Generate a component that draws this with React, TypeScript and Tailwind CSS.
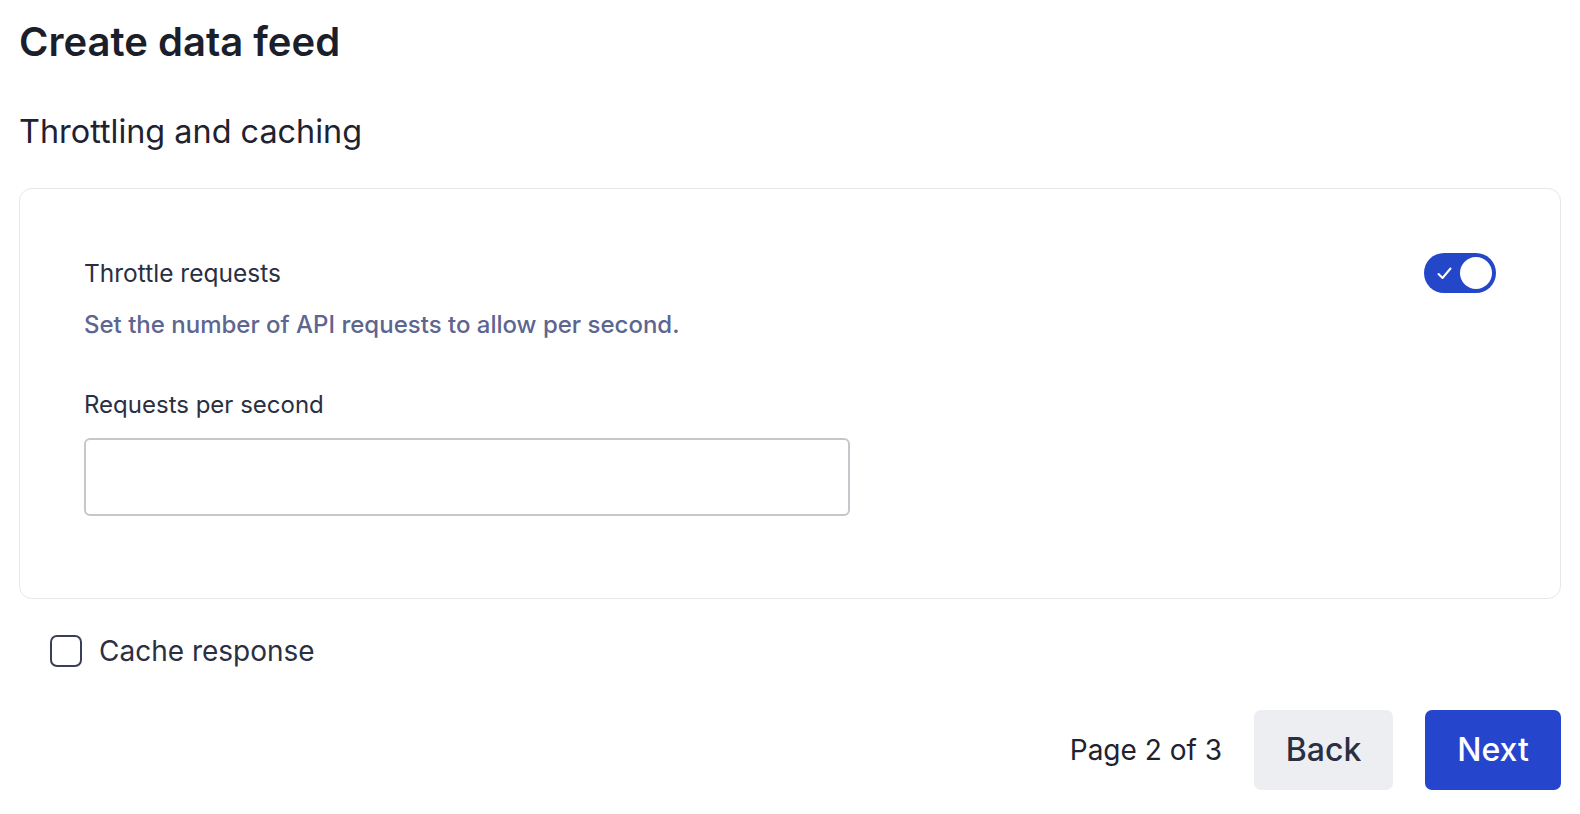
import { useState } from "react"

export default function App() {
  const [throttle, setThrottle] = useState(true)
  const [cache, setCache] = useState(false)

  return (
    <main className="min-h-screen bg-white px-[19px] pt-[18px] font-['Inter',sans-serif] text-[#1b1e2b]">
      <h1 className="text-[40px] font-semibold leading-[48px]">
        Create data feed
      </h1>
      <h2 className="mt-[46px] text-[32.4px] font-normal leading-[40px] text-[#1f2230]">
        Throttling and caching
      </h2>

      <section className="mt-[36px] rounded-[13px] border border-[#e6e7eb] px-[64px] pt-[64px] pb-[82px]">
        <div className="flex items-center justify-between">
          <span className="text-[24.5px] leading-[32px] text-[#2b2f42]">
            Throttle requests
          </span>
          <Toggle on={throttle} onClick={() => setThrottle(!throttle)} />
        </div>
        <p className="mt-[16px] text-[24px] font-medium leading-[32px] text-[#5d6591]">
          Set the number of API requests to allow per second.
        </p>

        <label className="mt-[48px] block text-[24px] leading-[32px] text-[#2b2f42]">
          Requests per second
        </label>
        <input
          type="text"
          className="mt-[17px] block h-[78px] w-[766px] rounded-[6px] border-2 border-[#c6c7cc] bg-white px-4 text-[24px] outline-none"
        />
      </section>

      <div className="mt-[34px] flex items-center pl-[31px]">
        <button
          onClick={() => setCache(!cache)}
          className="h-[32px] w-[32px] rounded-[7px] border-2 border-[#3b3f55] bg-white"
        />
        <span className="ml-[17px] text-[28px] leading-[36px] text-[#2b2f42]">
          Cache response
        </span>
      </div>

      <div className="mt-[41px] flex items-center justify-end gap-[32px]">
        <span className="text-[28px] leading-[36px] text-[#1f2230]">Page 2 of 3</span>
        <div className="flex gap-[32px]">
          <button className="h-[80px] w-[139px] rounded-[7px] bg-[#eceef2] text-[32px] font-medium text-[#2b2f42]">
            Back
          </button>
          <button className="h-[80px] w-[136px] rounded-[7px] bg-[#2545cc] text-[32px] font-medium text-white">
            Next
          </button>
        </div>
      </div>
    </main>
  )
}

function Toggle({ on, onClick }: { on: boolean; onClick: () => void }) {
  return (
    <button
      onClick={onClick}
      className="flex h-[40px] w-[72px] items-center justify-between rounded-full bg-[#2446c9] pl-[13px] pr-[4px]"
    >
      <svg width="15" height="13" viewBox="0 0 15 13" fill="none">
        <path
          d="M1.5 7 L5.5 11 L13.5 1.5"
          stroke="white"
          strokeWidth="2"
          strokeLinecap="round"
          strokeLinejoin="round"
        />
      </svg>
      <span className="h-[32px] w-[32px] rounded-full bg-white" />
    </button>
  )
}
